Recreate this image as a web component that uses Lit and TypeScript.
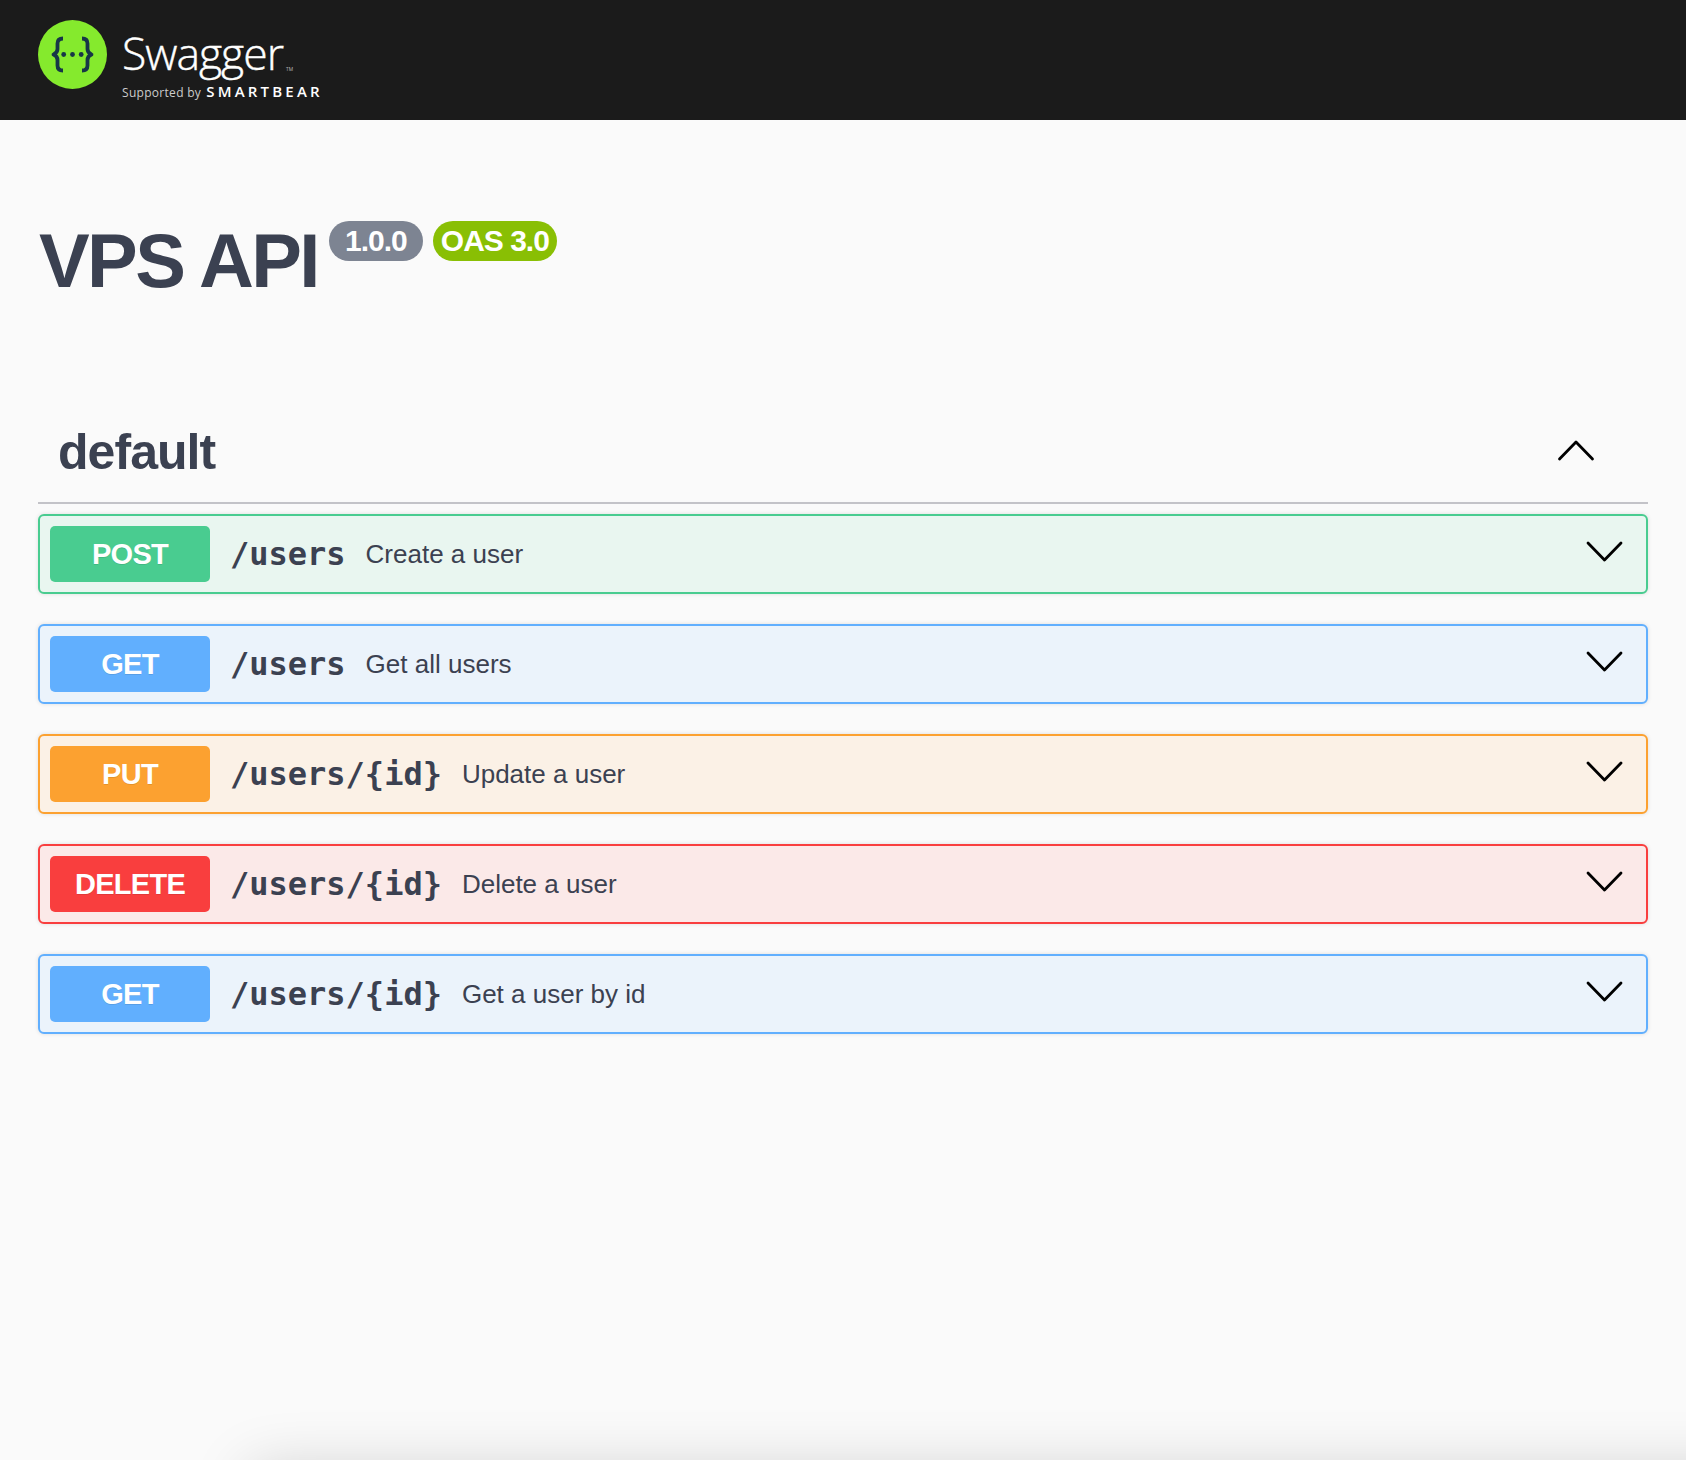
import { LitElement, html, css, svg } from 'lit';
import { customElement } from 'lit/decorators.js';

const ops = [
  { method: 'POST', kind: 'post', path: '/users', summary: 'Create a user' },
  { method: 'GET', kind: 'get', path: '/users', summary: 'Get all users' },
  { method: 'PUT', kind: 'put', path: '/users/{id}', summary: 'Update a user' },
  { method: 'DELETE', kind: 'delete', path: '/users/{id}', summary: 'Delete a user' },
  { method: 'GET', kind: 'get', path: '/users/{id}', summary: 'Get a user by id' },
];

const chevron = (d: string) => html`<svg class="chev" width="38" height="22" viewBox="0 0 38 22">
  ${svg`<path d=${d} fill="none" stroke="#000" stroke-width="2.8" stroke-linecap="round" stroke-linejoin="round"/>`}
</svg>`;

@customElement('app-root')
export class AppRoot extends LitElement {
  static styles = css`
    :host {
      display: block;
      position: relative;
      height: 1460px;
      overflow: hidden;
      background: #fafafa;
      color: #3b4151;
      font-family: 'Liberation Sans', Arial, sans-serif;
    }

    .topbar {
      height: 120px;
      box-sizing: border-box;
      background: #1b1b1b;
      padding: 20px 38px 0;
      display: flex;
      gap: 15px;
    }

    .brand { color: #fff; font-family: 'Open Sans', sans-serif; }
    .brand-name {
      font-size: 44.5px;
      font-weight: 300;
      line-height: 46px;
      letter-spacing: -1px;
      margin-top: 10px;
      -webkit-text-stroke: 0.4px #fff;
    }
    .brand-name sup { font-size: 5px; letter-spacing: 0; margin-left: 3px; vertical-align: -1px; -webkit-text-stroke: 0; }
    .brand-sub { display: flex; align-items: baseline; gap: 5px; margin-top: -11px; }
    .supported { font-size: 12px; letter-spacing: 0.3px; color: #ccc; }
    .smartbear { font-size: 15px; font-weight: 600; letter-spacing: 3.2px; }

    .content { padding: 0 38px; }

    .title-row { display: flex; align-items: flex-start; margin-top: 98px; height: 85px; }
    h1 {
      margin: 0 0 0 1px;
      font-size: 76px;
      line-height: 85px;
      font-weight: 700;
      letter-spacing: -2.6px;
    }
    .badge {
      margin-top: 3px;
      height: 40px;
      border-radius: 20px;
      color: #fff;
      font-size: 30px;
      font-weight: 700;
      letter-spacing: -1px;
      line-height: 40px;
      box-sizing: border-box;
      text-align: center;
    }
    .version { width: 94px; margin-left: 11px; background: #7d8492; }
    .oas { width: 124px; margin-left: 10px; background: #89bf04; }

    .section-head {
      margin-top: 98px;
      height: 103px;
      box-sizing: border-box;
      padding: 0 53px 0 20px;
      border-bottom: 2px solid #c3c3c8;
      display: flex;
      justify-content: space-between;
      align-items: center;
    }
    .section-head .chev { margin-bottom: 4px; }
    h2 { margin: 0; font-size: 50px; line-height: 56px; font-weight: 700; letter-spacing: -0.95px; }

    .ops { display: flex; flex-direction: column; gap: 30px; margin-top: 10px; }
    .op {
      height: 80px;
      box-sizing: border-box;
      border: 2px solid;
      border-radius: 6px;
      padding: 10px 22px 10px 10px;
      display: flex;
      align-items: center;
      box-shadow: 0 0 4px rgba(0, 0, 0, 0.12);
    }
    .op .chev { margin-bottom: 6px; }
    .method {
      width: 160px;
      height: 56px;
      flex: none;
      border-radius: 5px;
      color: #fff;
      font-size: 29px;
      font-weight: 700;
      letter-spacing: -0.7px;
      line-height: 56px;
      text-align: center;
      text-shadow: 0 1px 0 rgba(0, 0, 0, 0.1);
    }
    .path {
      margin-left: 20px;
      font-family: 'DejaVu Sans Mono', monospace;
      font-size: 32px;
      font-weight: 700;
    }
    .summary { margin-left: 20px; font-size: 26px; flex: 1; }

    .post { border-color: #49cc90; background: #e9f6f0; }
    .post .method { background: #49cc90; }
    .get { border-color: #61affe; background: #ebf3fb; }
    .get .method { background: #61affe; }
    .put { border-color: #fca130; background: #fbf1e6; }
    .put .method { background: #fca130; }
    .delete { border-color: #f93e3e; background: #fbe9e8; }
    .delete .method { background: #f93e3e; }

    /* soft shadow of something sitting just below the fold */
    .fold {
      position: absolute;
      left: 250px;
      right: -100px;
      top: 1470px;
      height: 100px;
      box-shadow: 0 0 60px rgba(0, 0, 0, 0.18);
    }
  `;

  render() {
    return html`
      <div class="topbar">
        <svg width="69" height="69" viewBox="0 0 69 69">
          <circle cx="34.5" cy="34.5" r="34.5" fill="#85ea2d"/>
          <g fill="none" stroke="#173647" stroke-width="3.8" stroke-linecap="butt" stroke-linejoin="round">
            <path d="M25 18.500c-3.500 0-5.500 1.500-5.500 5v5.500c0 3-1.500 4.500-4 5.500 2.500 1 4 2.500 4 5.500v5.500c0 3.500 2 5 5.500 5"/>
            <path d="M44 18.500c3.500 0 5.500 1.500 5.500 5v5.500c0 3 1.500 4.500 4 5.500-2.500 1-4 2.500-4 5.500v5.500c0 3.500-2 5-5.500 5"/>
          </g>
          <g fill="#173647">
            <circle cx="25.700" cy="34.500" r="2.400"/>
            <circle cx="34.500" cy="34.500" r="2.400"/>
            <circle cx="43.200" cy="34.500" r="2.400"/>
          </g>
        </svg>
        <div class="brand">
          <div class="brand-name">Swagger<sup>TM</sup></div>
          <div class="brand-sub">
            <span class="supported">Supported by</span>
            <span class="smartbear">SMARTBEAR</span>
          </div>
        </div>
      </div>
      <div class="content">
        <div class="title-row">
          <h1>VPS API</h1>
          <span class="badge version">1.0.0</span>
          <span class="badge oas">OAS 3.0</span>
        </div>
        <div class="section-head">
          <h2>default</h2>
          ${chevron('M2.500 20 L19 3 L35.500 20')}
        </div>
        <div class="ops">
          ${ops.map(
            (op) => html`
              <div class="op ${op.kind}">
                <span class="method">${op.method}</span>
                <span class="path">${op.path}</span>
                <span class="summary">${op.summary}</span>
                ${chevron('M2 3 L18.500 20 L35 3')}
              </div>
            `,
          )}
        </div>
      </div>
      <div class="fold"></div>
    `;
  }
}
